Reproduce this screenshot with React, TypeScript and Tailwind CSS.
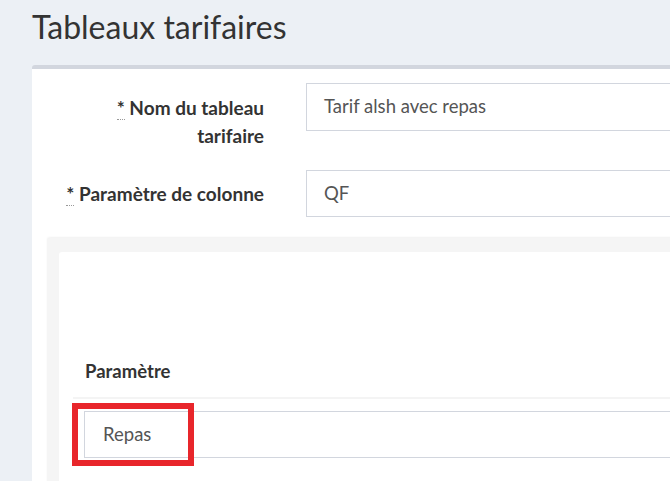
import React from 'react';

const Req: React.FC = () => (
  <abbr title="requis" className="no-underline border-b border-dotted border-[#999] leading-none">
    *
  </abbr>
);

export default function App() {
  return (
    <div
      className="relative w-[670px] h-[481px] overflow-hidden bg-[#ecf0f5] text-[#333]"
      style={{ fontFamily: 'Lato, "Open Sans", sans-serif' }}
    >
      {/* Page title */}
      <h1 className="pl-[32px] pt-[6px] h-[65px] text-[32px] leading-[42px] font-normal text-[#333]">
        Tableaux tarifaires
      </h1>

      {/* Main card */}
      <div className="ml-[32px] w-[700px] bg-white border-t-4 border-[#d2d6de] rounded-t-[3px] pt-[14px]">
        <div className="flex items-start">
          <label className="ml-[22px] w-[210px] shrink-0 pt-[11px] text-right text-[19px] leading-[28px] font-bold">
            <Req /> Nom du tableau tarifaire
          </label>
          <div className="ml-[42px] flex-1 h-[48px] border border-[#d2d6de] flex items-center pl-[17px] text-[18.5px] text-[#555]">
            Tarif alsh avec repas
          </div>
        </div>

        <div className="flex items-center mt-[20px]">
          <label className="ml-[22px] w-[210px] shrink-0 text-right text-[19px] leading-[28px] font-bold">
            <Req /> Paramètre de colonne
          </label>
          <div className="ml-[42px] flex-1 h-[47px] border border-[#d2d6de] flex items-center pl-[17px] text-[18.5px] text-[#555]">
            QF
          </div>
        </div>

        {/* Nested box */}
        <div className="mt-[21px] ml-[15px] bg-[#f5f5f5] rounded-[3px] shadow-[0_-1px_2px_rgba(0,0,0,0.06)] pt-[14px] pl-[12px] h-[260px]">
          <div className="bg-white rounded-tl-[3px] h-full pt-[14px] pl-[14px]">
            <table className="w-full border-collapse">
              <thead>
                <tr className="border-b-2 border-[#f4f4f4]">
                  <th className="h-[132px] align-bottom pl-[12px] pb-[14px] text-left text-[18.5px] font-bold leading-[24px]">
                    Paramètre
                  </th>
                </tr>
              </thead>
              <tbody>
                <tr>
                  <td className="pt-[12px] pl-[11px]">
                    <div className="h-[47px] border border-[#d2d6de] flex items-center pl-[18px] text-[18.5px] text-[#555]">
                      Repas
                    </div>
                  </td>
                </tr>
              </tbody>
            </table>
          </div>
        </div>
      </div>

      {/* Red highlight annotation */}
      <div className="absolute left-[72px] top-[403px] w-[122px] h-[63px] border-[6px] border-[#e8262b]" />
    </div>
  );
}
